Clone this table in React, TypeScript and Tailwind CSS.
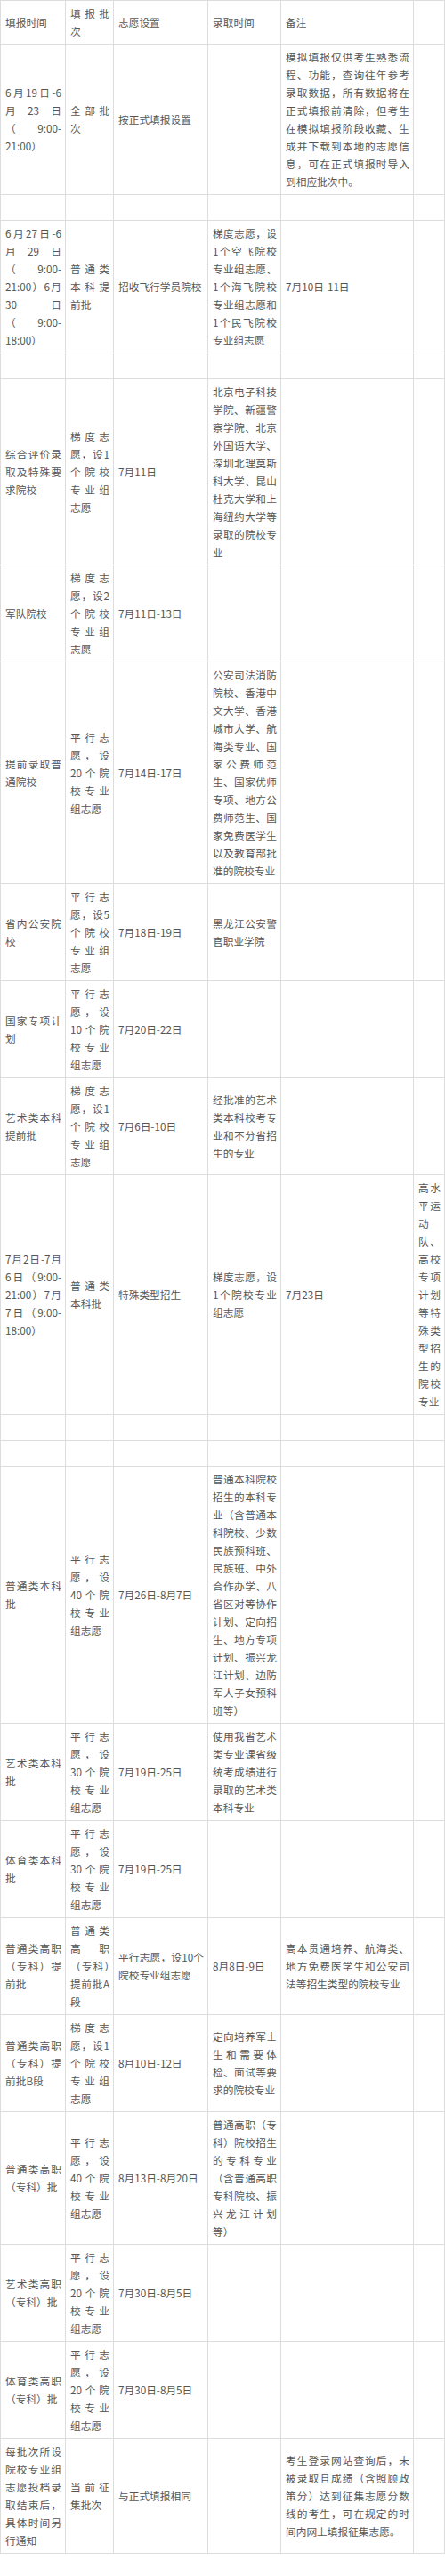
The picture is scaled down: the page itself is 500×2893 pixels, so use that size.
const rows: string[][] = [
  ['填报时间', '填报批次', '志愿设置', '录取时间', '备注', ''],
  [
    '6月19日-6月23日（9:00-21:00）',
    '全部批次',
    '按正式填报设置',
    '',
    '模拟填报仅供考生熟悉流程、功能，查询往年参考录取数据，所有数据将在正式填报前清除，但考生在模拟填报阶段收藏、生成并下载到本地的志愿信息，可在正式填报时导入到相应批次中。',
    '',
  ],
  ['', '', '', '', '', ''],
  [
    '6月27日-6月29日（9:00-21:00）6月30日（9:00-18:00）',
    '普通类本科提前批',
    '招收飞行学员院校',
    '梯度志愿，设1个空飞院校专业组志愿、1个海飞院校专业组志愿和1个民飞院校专业组志愿',
    '7月10日-11日',
    '',
  ],
  ['', '', '', '', '', ''],
  [
    '综合评价录取及特殊要求院校',
    '梯度志愿，设1个院校专业组志愿',
    '7月11日',
    '北京电子科技学院、新疆警察学院、北京外国语大学、深圳北理莫斯科大学、昆山杜克大学和上海纽约大学等录取的院校专业',
    '',
    '',
  ],
  ['军队院校', '梯度志愿，设2个院校专业组志愿', '7月11日-13日', '', '', ''],
  [
    '提前录取普通院校',
    '平行志愿，设20个院校专业组志愿',
    '7月14日-17日',
    '公安司法消防院校、香港中文大学、香港城市大学、航海类专业、国家公费师范生、国家优师专项、地方公费师范生、国家免费医学生以及教育部批准的院校专业',
    '',
    '',
  ],
  ['省内公安院校', '平行志愿，设5个院校专业组志愿', '7月18日-19日', '黑龙江公安警官职业学院', '', ''],
  ['国家专项计划', '平行志愿，设10个院校专业组志愿', '7月20日-22日', '', '', ''],
  [
    '艺术类本科提前批',
    '梯度志愿，设1个院校专业组志愿',
    '7月6日-10日',
    '经批准的艺术类本科校考专业和不分省招生的专业',
    '',
    '',
  ],
  [
    '7月2日-7月6日（9:00-21:00）7月7日（9:00-18:00）',
    '普通类本科批',
    '特殊类型招生',
    '梯度志愿，设1个院校专业组志愿',
    '7月23日',
    '高水平运动队、高校专项计划等特殊类型招生的院校专业',
  ],
  ['', '', '', '', '', ''],
  ['', '', '', '', '', ''],
  [
    '普通类本科批',
    '平行志愿，设40个院校专业组志愿',
    '7月26日-8月7日',
    '普通本科院校招生的本科专业（含普通本科院校、少数民族预科班、民族班、中外合作办学、八省区对等协作计划、定向招生、地方专项计划、振兴龙江计划、边防军人子女预科班等）',
    '',
    '',
  ],
  [
    '艺术类本科批',
    '平行志愿，设30个院校专业组志愿',
    '7月19日-25日',
    '使用我省艺术类专业课省级统考成绩进行录取的艺术类本科专业',
    '',
    '',
  ],
  ['体育类本科批', '平行志愿，设30个院校专业组志愿', '7月19日-25日', '', '', ''],
  [
    '普通类高职（专科）提前批',
    '普通类高职（专科）提前批A段',
    '平行志愿，设10个院校专业组志愿',
    '8月8日-9日',
    '高本贯通培养、航海类、地方免费医学生和公安司法等招生类型的院校专业',
    '',
  ],
  [
    '普通类高职（专科）提前批B段',
    '梯度志愿，设1个院校专业组志愿',
    '8月10日-12日',
    '定向培养军士生和需要体检、面试等要求的院校专业',
    '',
    '',
  ],
  [
    '普通类高职（专科）批',
    '平行志愿，设40个院校专业组志愿',
    '8月13日-8月20日',
    '普通高职（专科）院校招生的专科专业（含普通高职专科院校、振兴龙江计划等）',
    '',
    '',
  ],
  ['艺术类高职（专科）批', '平行志愿，设20个院校专业组志愿', '7月30日-8月5日', '', '', ''],
  ['体育类高职（专科）批', '平行志愿，设20个院校专业组志愿', '7月30日-8月5日', '', '', ''],
  [
    '每批次所设院校专业组志愿投档录取结束后，具体时间另行通知',
    '当前征集批次',
    '与正式填报相同',
    '',
    '考生登录网站查询后，未被录取且成绩（含照顾政策分）达到征集志愿分数线的考生，可在规定的时间内网上填报征集志愿。',
    '',
  ],
];

export default function App() {
  return (
    <div className="w-[500px] bg-white">
      <table
        className="w-[499px] table-fixed border-collapse text-[11.7px] leading-[20px] text-[#555]"
        style={{ fontFamily: '"Noto Sans CJK SC", "Microsoft YaHei", sans-serif' }}
      >
        <colgroup>
          <col className="w-[73px]" />
          <col className="w-[54px]" />
          <col className="w-[106px]" />
          <col className="w-[82px]" />
          <col className="w-[149px]" />
          <col className="w-[35px]" />
        </colgroup>
        <tbody>
          {rows.map((row, i) => (
            <tr key={i}>
              {row.map((cell, j) => (
                <td
                  key={j}
                  className="border border-[#ddd] py-[4px] pl-[5px] pr-[4px] align-middle text-justify break-words"
                >
                  {cell || '\u00a0'}
                </td>
              ))}
            </tr>
          ))}
        </tbody>
      </table>
    </div>
  );
}
